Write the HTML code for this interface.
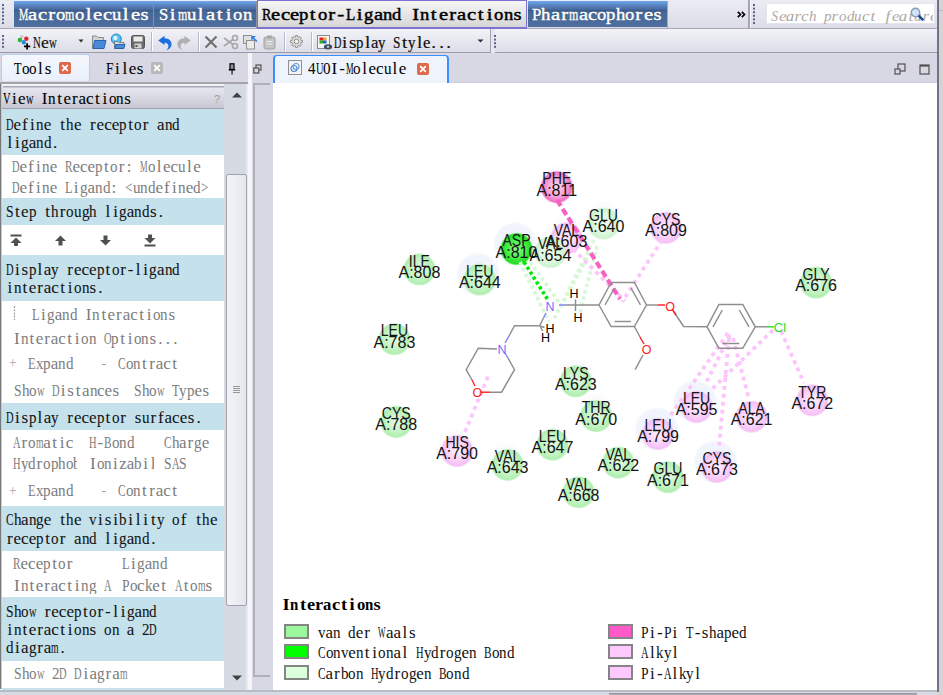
<!DOCTYPE html>
<html><head><meta charset="utf-8"><style>
*{margin:0;padding:0;box-sizing:border-box}
html,body{width:943px;height:695px;overflow:hidden;background:#d8d8d8}
body{position:relative;font-family:"Liberation Serif",serif}
.a{position:absolute}
.m{position:absolute;white-space:nowrap;font-family:"Liberation Serif",serif;line-height:16px;height:16px}
.m i{display:inline-block;font-style:normal;text-align:center;vertical-align:top}
.blue{position:absolute;left:2px;width:222px;background:#c5e1ec}
svg{position:absolute;left:0;top:0}
</style></head><body>
<div class="a" style="left:0px;top:0px;width:938px;height:28px;background:linear-gradient(#ececf4,#dcdce8)"></div>
<div class="a" style="left:0px;top:28px;width:938px;height:1px;background:#a8a8b8"></div>
<svg style="position:absolute;left:2px;top:4px" width="2" height="22"><rect x="0" y="0.0" width="2" height="2" fill="#5c6490"/><rect x="0" y="3.6" width="2" height="2" fill="#5c6490"/><rect x="0" y="7.2" width="2" height="2" fill="#5c6490"/><rect x="0" y="10.8" width="2" height="2" fill="#5c6490"/><rect x="0" y="14.4" width="2" height="2" fill="#5c6490"/><rect x="0" y="18.0" width="2" height="2" fill="#5c6490"/></svg>
<div class="a" style="left:14px;top:1px;width:139px;height:26px;background:linear-gradient(#70a8f0 0px,#5a86c0 4px,#4a6ea4 8px,#3c5c8c 9.5px,#466898 11px,#4d6e9e 26px)"></div>
<div class="a" style="left:153px;top:1px;width:1px;height:27px;background:#8890a0"></div>
<div class="a" style="left:154px;top:1px;width:102px;height:26px;background:linear-gradient(#70a8f0 0px,#5a86c0 4px,#4a6ea4 8px,#3c5c8c 9.5px,#466898 11px,#4d6e9e 26px)"></div>
<div class="a" style="left:256px;top:1px;width:1px;height:27px;background:#8890a0"></div>
<div class="a" style="left:257px;top:0px;width:270px;height:29px;border:1px solid #7c72d2;border-width:1px 1px 2px 1px;background:linear-gradient(#f6f6f6,#e8e8e8 45%,#d6d6d6)"></div>
<div class="a" style="left:528px;top:1px;width:139px;height:26px;background:linear-gradient(#70a8f0 0px,#5a86c0 4px,#4a6ea4 8px,#3c5c8c 9.5px,#466898 11px,#4d6e9e 26px)"></div>
<div class="a" style="left:667px;top:1px;width:1px;height:27px;background:#a8a8b8"></div>
<div class="m" style="left:19px;top:6.1px;font-size:17.5px;color:#fff;font-weight:normal;-webkit-text-stroke:0.45px #fff;text-shadow:0 0 1px #1a2a48;"><i style="width:15.56px;margin-right:-6.26px;transform:scaleX(0.598);transform-origin:0 0">M</i><i style="width:9.3px;transform:scaleX(1.180)">a</i><i style="width:9.3px;transform:scaleX(1.180)">c</i><i style="width:9.3px;transform:scaleX(1.180)">r</i><i style="width:9.3px;transform:scaleX(1.063)">o</i><i style="width:13.61px;margin-right:-4.31px;transform:scaleX(0.683);transform-origin:0 0">m</i><i style="width:9.3px;transform:scaleX(1.063)">o</i><i style="width:9.3px;transform:scaleX(1.180)">l</i><i style="width:9.3px;transform:scaleX(1.180)">e</i><i style="width:9.3px;transform:scaleX(1.180)">c</i><i style="width:9.3px;transform:scaleX(1.063)">u</i><i style="width:9.3px;transform:scaleX(1.180)">l</i><i style="width:9.3px;transform:scaleX(1.180)">e</i><i style="width:9.3px;transform:scaleX(1.180)">s</i></div>
<div class="m" style="left:159px;top:6.1px;font-size:17.5px;color:#fff;font-weight:normal;-webkit-text-stroke:0.45px #fff;text-shadow:0 0 1px #1a2a48;"><i style="width:9.73px;margin-right:-0.43px;transform:scaleX(0.956);transform-origin:0 0">S</i><i style="width:9.3px;transform:scaleX(1.180)">i</i><i style="width:13.61px;margin-right:-4.31px;transform:scaleX(0.683);transform-origin:0 0">m</i><i style="width:9.3px;transform:scaleX(1.063)">u</i><i style="width:9.3px;transform:scaleX(1.180)">l</i><i style="width:9.3px;transform:scaleX(1.180)">a</i><i style="width:9.3px;transform:scaleX(1.180)">t</i><i style="width:9.3px;transform:scaleX(1.180)">i</i><i style="width:9.3px;transform:scaleX(1.063)">o</i><i style="width:9.3px;transform:scaleX(1.063)">n</i></div>
<div class="m" style="left:262px;top:6.1px;font-size:17.5px;color:#000;font-weight:normal;-webkit-text-stroke:0.45px #000;"><i style="width:11.67px;margin-right:-2.37px;transform:scaleX(0.797);transform-origin:0 0">R</i><i style="width:9.3px;transform:scaleX(1.180)">e</i><i style="width:9.3px;transform:scaleX(1.180)">c</i><i style="width:9.3px;transform:scaleX(1.180)">e</i><i style="width:9.3px;transform:scaleX(1.063)">p</i><i style="width:9.3px;transform:scaleX(1.180)">t</i><i style="width:9.3px;transform:scaleX(1.063)">o</i><i style="width:9.3px;transform:scaleX(1.180)">r</i><i style="width:9.3px;transform:scaleX(1.180)">-</i><i style="width:10.69px;margin-right:-1.39px;transform:scaleX(0.870);transform-origin:0 0">L</i><i style="width:9.3px;transform:scaleX(1.180)">i</i><i style="width:9.3px;transform:scaleX(1.063)">g</i><i style="width:9.3px;transform:scaleX(1.180)">a</i><i style="width:9.3px;transform:scaleX(1.063)">n</i><i style="width:9.3px;transform:scaleX(1.063)">d</i><i style="width:9.3px"></i><i style="width:9.3px;transform:scaleX(1.180)">I</i><i style="width:9.3px;transform:scaleX(1.063)">n</i><i style="width:9.3px;transform:scaleX(1.180)">t</i><i style="width:9.3px;transform:scaleX(1.180)">e</i><i style="width:9.3px;transform:scaleX(1.180)">r</i><i style="width:9.3px;transform:scaleX(1.180)">a</i><i style="width:9.3px;transform:scaleX(1.180)">c</i><i style="width:9.3px;transform:scaleX(1.180)">t</i><i style="width:9.3px;transform:scaleX(1.180)">i</i><i style="width:9.3px;transform:scaleX(1.063)">o</i><i style="width:9.3px;transform:scaleX(1.063)">n</i><i style="width:9.3px;transform:scaleX(1.180)">s</i></div>
<div class="m" style="left:532px;top:6.1px;font-size:17.5px;color:#fff;font-weight:normal;-webkit-text-stroke:0.45px #fff;text-shadow:0 0 1px #1a2a48;"><i style="width:9.73px;margin-right:-0.43px;transform:scaleX(0.956);transform-origin:0 0">P</i><i style="width:9.3px;transform:scaleX(1.063)">h</i><i style="width:9.3px;transform:scaleX(1.180)">a</i><i style="width:9.3px;transform:scaleX(1.180)">r</i><i style="width:13.61px;margin-right:-4.31px;transform:scaleX(0.683);transform-origin:0 0">m</i><i style="width:9.3px;transform:scaleX(1.180)">a</i><i style="width:9.3px;transform:scaleX(1.180)">c</i><i style="width:9.3px;transform:scaleX(1.063)">o</i><i style="width:9.3px;transform:scaleX(1.063)">p</i><i style="width:9.3px;transform:scaleX(1.063)">h</i><i style="width:9.3px;transform:scaleX(1.063)">o</i><i style="width:9.3px;transform:scaleX(1.180)">r</i><i style="width:9.3px;transform:scaleX(1.180)">e</i><i style="width:9.3px;transform:scaleX(1.180)">s</i></div>
<svg style="position:absolute;left:737px;top:11px" width="9" height="7"><path d="M0.8 0.8L3.5 3.5L0.8 6.2M4.8 0.8L7.5 3.5L4.8 6.2" fill="none" stroke="#000" stroke-width="1.7"/></svg>
<div class="a" style="left:748px;top:0px;width:2px;height:29px;background:#a4a4b4"></div>
<div class="a" style="left:750px;top:0px;width:1px;height:28px;background:#f8f8fc"></div>
<svg style="position:absolute;left:753px;top:4px" width="2" height="22"><rect x="0" y="0.0" width="2" height="2" fill="#5c6490"/><rect x="0" y="3.6" width="2" height="2" fill="#5c6490"/><rect x="0" y="7.2" width="2" height="2" fill="#5c6490"/><rect x="0" y="10.8" width="2" height="2" fill="#5c6490"/><rect x="0" y="14.4" width="2" height="2" fill="#5c6490"/><rect x="0" y="18.0" width="2" height="2" fill="#5c6490"/></svg>
<div class="a" style="left:766px;top:3px;width:169px;height:21px;background:#fff;border:1px solid #e4e4ec"></div>
<div class="m" style="left:771px;top:8.4px;font-size:15.5px;color:#b0a8a4;font-weight:normal;width:162px;overflow:hidden;"><i style="width:8.62px;margin-right:-1.07px;transform:scaleX(0.876);transform-origin:0 0;font-style:italic">S</i><i style="width:7.55px;transform:scaleX(1.097);font-style:italic">e</i><i style="width:7.55px;transform:scaleX(1.097);font-style:italic">a</i><i style="width:7.55px;transform:scaleX(1.100);font-style:italic">r</i><i style="width:7.55px;transform:scaleX(1.097);font-style:italic">c</i><i style="width:7.75px;margin-right:-0.20px;transform:scaleX(0.974);transform-origin:0 0;font-style:italic">h</i><i style="width:7.55px"></i><i style="width:7.75px;margin-right:-0.20px;transform:scaleX(0.974);transform-origin:0 0;font-style:italic">p</i><i style="width:7.55px;transform:scaleX(1.100);font-style:italic">r</i><i style="width:7.75px;margin-right:-0.20px;transform:scaleX(0.974);transform-origin:0 0;font-style:italic">o</i><i style="width:7.75px;margin-right:-0.20px;transform:scaleX(0.974);transform-origin:0 0;font-style:italic">d</i><i style="width:7.75px;margin-right:-0.20px;transform:scaleX(0.974);transform-origin:0 0;font-style:italic">u</i><i style="width:7.55px;transform:scaleX(1.097);font-style:italic">c</i><i style="width:7.55px;transform:scaleX(1.100);font-style:italic">t</i><i style="width:7.55px"></i><i style="width:7.55px;transform:scaleX(1.100);font-style:italic">f</i><i style="width:7.55px;transform:scaleX(1.097);font-style:italic">e</i><i style="width:7.55px;transform:scaleX(1.097);font-style:italic">a</i><i style="width:7.55px;transform:scaleX(1.100);font-style:italic">t</i><i style="width:7.75px;margin-right:-0.20px;transform:scaleX(0.974);transform-origin:0 0;font-style:italic">u</i><i style="width:7.55px;transform:scaleX(1.100);font-style:italic">r</i><i style="width:7.55px;transform:scaleX(1.097);font-style:italic">e</i></div>
<div class="a" style="left:0px;top:29px;width:491px;height:24px;background:linear-gradient(#f2f2f8,#dcdce8)"></div>
<div class="a" style="left:495px;top:29px;width:443px;height:24px;background:linear-gradient(#f2f2f8,#dcdce8)"></div>
<div class="a" style="left:491px;top:29px;width:4px;height:24px;background:#e6e6ee"></div>
<div class="a" style="left:0px;top:52px;width:491px;height:1px;background:#9a9aaa"></div>
<div class="a" style="left:490px;top:29px;width:1px;height:24px;background:#a0a0b0"></div>
<div class="a" style="left:495px;top:52px;width:443px;height:1px;background:#9a9aaa"></div>
<svg style="position:absolute;left:2px;top:35px" width="2" height="14"><rect x="0" y="0.0" width="2" height="2" fill="#5c6490"/><rect x="0" y="3.6" width="2" height="2" fill="#5c6490"/><rect x="0" y="7.2" width="2" height="2" fill="#5c6490"/><rect x="0" y="10.8" width="2" height="2" fill="#5c6490"/></svg>
<svg style="position:absolute;left:494px;top:35px" width="2" height="14"><rect x="0" y="0.0" width="2" height="2" fill="#5c6490"/><rect x="0" y="3.6" width="2" height="2" fill="#5c6490"/><rect x="0" y="7.2" width="2" height="2" fill="#5c6490"/><rect x="0" y="10.8" width="2" height="2" fill="#5c6490"/></svg>
<div class="a" style="left:151px;top:32px;width:1px;height:19px;background:#b8b8c8"></div>
<div class="a" style="left:152px;top:32px;width:1px;height:19px;background:#fff"></div>
<div class="a" style="left:198px;top:32px;width:1px;height:19px;background:#b8b8c8"></div>
<div class="a" style="left:199px;top:32px;width:1px;height:19px;background:#fff"></div>
<div class="a" style="left:284px;top:32px;width:1px;height:19px;background:#b8b8c8"></div>
<div class="a" style="left:285px;top:32px;width:1px;height:19px;background:#fff"></div>
<div class="a" style="left:311px;top:32px;width:1px;height:19px;background:#b8b8c8"></div>
<div class="a" style="left:312px;top:32px;width:1px;height:19px;background:#fff"></div>
<div class="m" style="left:33px;top:35.3px;font-size:17px;color:#111;font-weight:normal;-webkit-text-stroke:0.2px #111;"><i style="width:12.28px;margin-right:-4.48px;transform:scaleX(0.635);transform-origin:0 0">N</i><i style="width:7.8px;transform:scaleX(1.034)">e</i><i style="width:12.28px;margin-right:-4.48px;transform:scaleX(0.635);transform-origin:0 0">w</i></div>
<div class="m" style="left:334px;top:35.0px;font-size:17px;color:#111;font-weight:normal;-webkit-text-stroke:0.2px #111;"><i style="width:12.28px;margin-right:-4.86px;transform:scaleX(0.604);transform-origin:0 0">D</i><i style="width:7.42px;transform:scaleX(1.120)">i</i><i style="width:7.42px;transform:scaleX(1.120)">s</i><i style="width:8.50px;margin-right:-1.08px;transform:scaleX(0.873);transform-origin:0 0">p</i><i style="width:7.42px;transform:scaleX(1.120)">l</i><i style="width:7.55px;margin-right:-0.13px;transform:scaleX(0.983);transform-origin:0 0">a</i><i style="width:8.50px;margin-right:-1.08px;transform:scaleX(0.873);transform-origin:0 0">y</i><i style="width:7.42px"></i><i style="width:9.45px;margin-right:-2.03px;transform:scaleX(0.785);transform-origin:0 0">S</i><i style="width:7.42px;transform:scaleX(1.120)">t</i><i style="width:8.50px;margin-right:-1.08px;transform:scaleX(0.873);transform-origin:0 0">y</i><i style="width:7.42px;transform:scaleX(1.120)">l</i><i style="width:7.55px;margin-right:-0.13px;transform:scaleX(0.983);transform-origin:0 0">e</i><i style="width:7.42px;transform:scaleX(1.120)">.</i><i style="width:7.42px;transform:scaleX(1.120)">.</i><i style="width:7.42px;transform:scaleX(1.120)">.</i></div>
<div class="a" style="left:0px;top:53px;width:248px;height:29px;background:#d8d8e4"></div>
<div class="a" style="left:1px;top:54px;width:89px;height:27px;background:linear-gradient(#f4f7fd,#eaf0fa);border:1px solid #b4cdf0;border-bottom:none;border-radius:3px 3px 0 0"></div>
<div class="m" style="left:14px;top:60.9px;font-size:17px;color:#000;font-weight:normal;-webkit-text-stroke:0.08px #000;"><i style="width:10.38px;margin-right:-2.83px;transform:scaleX(0.727);transform-origin:0 0">T</i><i style="width:8.50px;margin-right:-0.95px;transform:scaleX(0.888);transform-origin:0 0">o</i><i style="width:8.50px;margin-right:-0.95px;transform:scaleX(0.888);transform-origin:0 0">o</i><i style="width:7.55px">l</i><i style="width:7.55px">s</i></div>
<div class="m" style="left:106px;top:61.1px;font-size:17px;color:#000;font-weight:normal;-webkit-text-stroke:0.08px #000;"><i style="width:9.45px;margin-right:-1.90px;transform:scaleX(0.799);transform-origin:0 0">F</i><i style="width:7.55px">i</i><i style="width:7.55px">l</i><i style="width:7.55px">e</i><i style="width:7.55px">s</i></div>
<div class="a" style="left:0px;top:82px;width:248px;height:2px;background:#a4a4ac"></div>
<div class="a" style="left:0px;top:84px;width:248px;height:606px;background:#fff"></div>
<div class="a" style="left:0px;top:84px;width:2px;height:605px;background:#7a7a7a"></div>
<div class="a" style="left:1px;top:84px;width:1px;height:605px;background:#c8c8c8"></div>
<div class="a" style="left:2px;top:84px;width:222px;height:25px;background:linear-gradient(#ececf4,#c8c8d4);border-bottom:1px solid #a0a0ac"></div>
<div class="a" style="left:2px;top:84px;width:222px;height:2px;background:#f2f2f6"></div>
<div class="a" style="left:3px;top:86px;width:221px;height:1px;background:#a8a8b4"></div>
<div class="a" style="left:3px;top:87px;width:221px;height:1px;background:#c8c8d2"></div>
<div class="m" style="left:3px;top:90.7px;font-size:17px;color:#000;font-weight:normal;-webkit-text-stroke:0.08px #000;"><i style="width:12.28px;margin-right:-4.73px;transform:scaleX(0.615);transform-origin:0 0">V</i><i style="width:7.55px">i</i><i style="width:7.55px">e</i><i style="width:12.28px;margin-right:-4.73px;transform:scaleX(0.615);transform-origin:0 0">w</i><i style="width:7.55px"></i><i style="width:7.55px">I</i><i style="width:8.50px;margin-right:-0.95px;transform:scaleX(0.888);transform-origin:0 0">n</i><i style="width:7.55px">t</i><i style="width:7.55px">e</i><i style="width:7.55px">r</i><i style="width:7.55px">a</i><i style="width:7.55px">c</i><i style="width:7.55px">t</i><i style="width:7.55px">i</i><i style="width:8.50px;margin-right:-0.95px;transform:scaleX(0.888);transform-origin:0 0">o</i><i style="width:8.50px;margin-right:-0.95px;transform:scaleX(0.888);transform-origin:0 0">n</i><i style="width:7.55px">s</i></div>
<div class="blue" style="top:109px;height:46px"></div>
<div class="blue" style="top:198px;height:27px"></div>
<div class="blue" style="top:255px;height:46px"></div>
<div class="blue" style="top:403px;height:27px"></div>
<div class="blue" style="top:506px;height:45px"></div>
<div class="blue" style="top:597px;height:64px"></div>
<div class="blue" style="top:688px;height:2px"></div>
<div class="m" style="left:6px;top:116.5px;font-size:17px;color:#141414;font-weight:normal;-webkit-text-stroke:0.08px #141414;"><i style="width:12.28px;margin-right:-4.73px;transform:scaleX(0.615);transform-origin:0 0">D</i><i style="width:7.55px">e</i><i style="width:7.55px">f</i><i style="width:7.55px">i</i><i style="width:8.50px;margin-right:-0.95px;transform:scaleX(0.888);transform-origin:0 0">n</i><i style="width:7.55px">e</i><i style="width:7.55px"></i><i style="width:7.55px">t</i><i style="width:8.50px;margin-right:-0.95px;transform:scaleX(0.888);transform-origin:0 0">h</i><i style="width:7.55px">e</i><i style="width:7.55px"></i><i style="width:7.55px">r</i><i style="width:7.55px">e</i><i style="width:7.55px">c</i><i style="width:7.55px">e</i><i style="width:8.50px;margin-right:-0.95px;transform:scaleX(0.888);transform-origin:0 0">p</i><i style="width:7.55px">t</i><i style="width:8.50px;margin-right:-0.95px;transform:scaleX(0.888);transform-origin:0 0">o</i><i style="width:7.55px">r</i><i style="width:7.55px"></i><i style="width:7.55px">a</i><i style="width:8.50px;margin-right:-0.95px;transform:scaleX(0.888);transform-origin:0 0">n</i><i style="width:8.50px;margin-right:-0.95px;transform:scaleX(0.888);transform-origin:0 0">d</i></div>
<div class="m" style="left:6px;top:135.0px;font-size:17px;color:#141414;font-weight:normal;-webkit-text-stroke:0.08px #141414;"><i style="width:7.55px">l</i><i style="width:7.55px">i</i><i style="width:8.50px;margin-right:-0.95px;transform:scaleX(0.888);transform-origin:0 0">g</i><i style="width:7.55px">a</i><i style="width:8.50px;margin-right:-0.95px;transform:scaleX(0.888);transform-origin:0 0">n</i><i style="width:8.50px;margin-right:-0.95px;transform:scaleX(0.888);transform-origin:0 0">d</i><i style="width:7.55px">.</i></div>
<div class="m" style="left:12px;top:159.0px;font-size:17px;color:#7c7c7c;font-weight:normal;"><i style="width:12.28px;margin-right:-4.73px;transform:scaleX(0.615);transform-origin:0 0">D</i><i style="width:7.55px">e</i><i style="width:7.55px">f</i><i style="width:7.55px">i</i><i style="width:8.50px;margin-right:-0.95px;transform:scaleX(0.888);transform-origin:0 0">n</i><i style="width:7.55px">e</i><i style="width:7.55px"></i><i style="width:11.34px;margin-right:-3.79px;transform:scaleX(0.666);transform-origin:0 0">R</i><i style="width:7.55px">e</i><i style="width:7.55px">c</i><i style="width:7.55px">e</i><i style="width:8.50px;margin-right:-0.95px;transform:scaleX(0.888);transform-origin:0 0">p</i><i style="width:7.55px">t</i><i style="width:8.50px;margin-right:-0.95px;transform:scaleX(0.888);transform-origin:0 0">o</i><i style="width:7.55px">r</i><i style="width:7.55px">:</i><i style="width:7.55px"></i><i style="width:15.12px;margin-right:-7.57px;transform:scaleX(0.499);transform-origin:0 0">M</i><i style="width:8.50px;margin-right:-0.95px;transform:scaleX(0.888);transform-origin:0 0">o</i><i style="width:7.55px">l</i><i style="width:7.55px">e</i><i style="width:7.55px">c</i><i style="width:8.50px;margin-right:-0.95px;transform:scaleX(0.888);transform-origin:0 0">u</i><i style="width:7.55px">l</i><i style="width:7.55px">e</i></div>
<div class="m" style="left:12px;top:180.0px;font-size:17px;color:#7c7c7c;font-weight:normal;"><i style="width:12.28px;margin-right:-4.73px;transform:scaleX(0.615);transform-origin:0 0">D</i><i style="width:7.55px">e</i><i style="width:7.55px">f</i><i style="width:7.55px">i</i><i style="width:8.50px;margin-right:-0.95px;transform:scaleX(0.888);transform-origin:0 0">n</i><i style="width:7.55px">e</i><i style="width:7.55px"></i><i style="width:10.38px;margin-right:-2.83px;transform:scaleX(0.727);transform-origin:0 0">L</i><i style="width:7.55px">i</i><i style="width:8.50px;margin-right:-0.95px;transform:scaleX(0.888);transform-origin:0 0">g</i><i style="width:7.55px">a</i><i style="width:8.50px;margin-right:-0.95px;transform:scaleX(0.888);transform-origin:0 0">n</i><i style="width:8.50px;margin-right:-0.95px;transform:scaleX(0.888);transform-origin:0 0">d</i><i style="width:7.55px">:</i><i style="width:7.55px"></i><i style="width:9.59px;margin-right:-2.04px;transform:scaleX(0.787);transform-origin:0 0">&lt;</i><i style="width:8.50px;margin-right:-0.95px;transform:scaleX(0.888);transform-origin:0 0">u</i><i style="width:8.50px;margin-right:-0.95px;transform:scaleX(0.888);transform-origin:0 0">n</i><i style="width:8.50px;margin-right:-0.95px;transform:scaleX(0.888);transform-origin:0 0">d</i><i style="width:7.55px">e</i><i style="width:7.55px">f</i><i style="width:7.55px">i</i><i style="width:8.50px;margin-right:-0.95px;transform:scaleX(0.888);transform-origin:0 0">n</i><i style="width:7.55px">e</i><i style="width:8.50px;margin-right:-0.95px;transform:scaleX(0.888);transform-origin:0 0">d</i><i style="width:9.59px;margin-right:-2.04px;transform:scaleX(0.787);transform-origin:0 0">&gt;</i></div>
<div class="m" style="left:6px;top:204.2px;font-size:17px;color:#141414;font-weight:normal;-webkit-text-stroke:0.08px #141414;"><i style="width:9.45px;margin-right:-1.90px;transform:scaleX(0.799);transform-origin:0 0">S</i><i style="width:7.55px">t</i><i style="width:7.55px">e</i><i style="width:8.50px;margin-right:-0.95px;transform:scaleX(0.888);transform-origin:0 0">p</i><i style="width:7.55px"></i><i style="width:7.55px">t</i><i style="width:8.50px;margin-right:-0.95px;transform:scaleX(0.888);transform-origin:0 0">h</i><i style="width:7.55px">r</i><i style="width:8.50px;margin-right:-0.95px;transform:scaleX(0.888);transform-origin:0 0">o</i><i style="width:8.50px;margin-right:-0.95px;transform:scaleX(0.888);transform-origin:0 0">u</i><i style="width:8.50px;margin-right:-0.95px;transform:scaleX(0.888);transform-origin:0 0">g</i><i style="width:8.50px;margin-right:-0.95px;transform:scaleX(0.888);transform-origin:0 0">h</i><i style="width:7.55px"></i><i style="width:7.55px">l</i><i style="width:7.55px">i</i><i style="width:8.50px;margin-right:-0.95px;transform:scaleX(0.888);transform-origin:0 0">g</i><i style="width:7.55px">a</i><i style="width:8.50px;margin-right:-0.95px;transform:scaleX(0.888);transform-origin:0 0">n</i><i style="width:8.50px;margin-right:-0.95px;transform:scaleX(0.888);transform-origin:0 0">d</i><i style="width:7.55px">s</i><i style="width:7.55px">.</i></div>
<div class="m" style="left:6px;top:261.7px;font-size:17px;color:#141414;font-weight:normal;-webkit-text-stroke:0.08px #141414;"><i style="width:12.28px;margin-right:-4.73px;transform:scaleX(0.615);transform-origin:0 0">D</i><i style="width:7.55px">i</i><i style="width:7.55px">s</i><i style="width:8.50px;margin-right:-0.95px;transform:scaleX(0.888);transform-origin:0 0">p</i><i style="width:7.55px">l</i><i style="width:7.55px">a</i><i style="width:8.50px;margin-right:-0.95px;transform:scaleX(0.888);transform-origin:0 0">y</i><i style="width:7.55px"></i><i style="width:7.55px">r</i><i style="width:7.55px">e</i><i style="width:7.55px">c</i><i style="width:7.55px">e</i><i style="width:8.50px;margin-right:-0.95px;transform:scaleX(0.888);transform-origin:0 0">p</i><i style="width:7.55px">t</i><i style="width:8.50px;margin-right:-0.95px;transform:scaleX(0.888);transform-origin:0 0">o</i><i style="width:7.55px">r</i><i style="width:7.55px">-</i><i style="width:7.55px">l</i><i style="width:7.55px">i</i><i style="width:8.50px;margin-right:-0.95px;transform:scaleX(0.888);transform-origin:0 0">g</i><i style="width:7.55px">a</i><i style="width:8.50px;margin-right:-0.95px;transform:scaleX(0.888);transform-origin:0 0">n</i><i style="width:8.50px;margin-right:-0.95px;transform:scaleX(0.888);transform-origin:0 0">d</i></div>
<div class="m" style="left:6px;top:280.3px;font-size:17px;color:#141414;font-weight:normal;-webkit-text-stroke:0.08px #141414;"><i style="width:7.55px">i</i><i style="width:8.50px;margin-right:-0.95px;transform:scaleX(0.888);transform-origin:0 0">n</i><i style="width:7.55px">t</i><i style="width:7.55px">e</i><i style="width:7.55px">r</i><i style="width:7.55px">a</i><i style="width:7.55px">c</i><i style="width:7.55px">t</i><i style="width:7.55px">i</i><i style="width:8.50px;margin-right:-0.95px;transform:scaleX(0.888);transform-origin:0 0">o</i><i style="width:8.50px;margin-right:-0.95px;transform:scaleX(0.888);transform-origin:0 0">n</i><i style="width:7.55px">s</i><i style="width:7.55px">.</i></div>
<div class="m" style="left:32px;top:306.8px;font-size:17px;color:#7c7c7c;font-weight:normal;"><i style="width:10.38px;margin-right:-2.83px;transform:scaleX(0.727);transform-origin:0 0">L</i><i style="width:7.55px">i</i><i style="width:8.50px;margin-right:-0.95px;transform:scaleX(0.888);transform-origin:0 0">g</i><i style="width:7.55px">a</i><i style="width:8.50px;margin-right:-0.95px;transform:scaleX(0.888);transform-origin:0 0">n</i><i style="width:8.50px;margin-right:-0.95px;transform:scaleX(0.888);transform-origin:0 0">d</i><i style="width:7.55px"></i><i style="width:7.55px">I</i><i style="width:8.50px;margin-right:-0.95px;transform:scaleX(0.888);transform-origin:0 0">n</i><i style="width:7.55px">t</i><i style="width:7.55px">e</i><i style="width:7.55px">r</i><i style="width:7.55px">a</i><i style="width:7.55px">c</i><i style="width:7.55px">t</i><i style="width:7.55px">i</i><i style="width:8.50px;margin-right:-0.95px;transform:scaleX(0.888);transform-origin:0 0">o</i><i style="width:8.50px;margin-right:-0.95px;transform:scaleX(0.888);transform-origin:0 0">n</i><i style="width:7.55px">s</i></div>
<div class="m" style="left:13px;top:330.8px;font-size:17px;color:#7c7c7c;font-weight:normal;"><i style="width:7.55px">I</i><i style="width:8.50px;margin-right:-0.95px;transform:scaleX(0.888);transform-origin:0 0">n</i><i style="width:7.55px">t</i><i style="width:7.55px">e</i><i style="width:7.55px">r</i><i style="width:7.55px">a</i><i style="width:7.55px">c</i><i style="width:7.55px">t</i><i style="width:7.55px">i</i><i style="width:8.50px;margin-right:-0.95px;transform:scaleX(0.888);transform-origin:0 0">o</i><i style="width:8.50px;margin-right:-0.95px;transform:scaleX(0.888);transform-origin:0 0">n</i><i style="width:7.55px"></i><i style="width:12.28px;margin-right:-4.73px;transform:scaleX(0.615);transform-origin:0 0">O</i><i style="width:8.50px;margin-right:-0.95px;transform:scaleX(0.888);transform-origin:0 0">p</i><i style="width:7.55px">t</i><i style="width:7.55px">i</i><i style="width:8.50px;margin-right:-0.95px;transform:scaleX(0.888);transform-origin:0 0">o</i><i style="width:8.50px;margin-right:-0.95px;transform:scaleX(0.888);transform-origin:0 0">n</i><i style="width:7.55px">s</i><i style="width:7.55px">.</i><i style="width:7.55px">.</i><i style="width:7.55px">.</i></div>
<div class="m" style="left:9px;top:355.3px;font-size:14px;color:#a8a8a8;font-weight:normal;"><i style="width:7.90px;margin-right:-0.35px;transform:scaleX(0.956);transform-origin:0 0">+</i></div>
<div class="m" style="left:28px;top:355.7px;font-size:17px;color:#7c7c7c;font-weight:normal;"><i style="width:10.38px;margin-right:-2.83px;transform:scaleX(0.727);transform-origin:0 0">E</i><i style="width:8.50px;margin-right:-0.95px;transform:scaleX(0.888);transform-origin:0 0">x</i><i style="width:8.50px;margin-right:-0.95px;transform:scaleX(0.888);transform-origin:0 0">p</i><i style="width:7.55px">a</i><i style="width:8.50px;margin-right:-0.95px;transform:scaleX(0.888);transform-origin:0 0">n</i><i style="width:8.50px;margin-right:-0.95px;transform:scaleX(0.888);transform-origin:0 0">d</i></div>
<div class="m" style="left:100px;top:355.7px;font-size:14px;color:#a0a0a0;font-weight:normal;"><i style="width:7.55px">-</i></div>
<div class="m" style="left:118px;top:355.7px;font-size:17px;color:#7c7c7c;font-weight:normal;"><i style="width:11.34px;margin-right:-3.79px;transform:scaleX(0.666);transform-origin:0 0">C</i><i style="width:8.50px;margin-right:-0.95px;transform:scaleX(0.888);transform-origin:0 0">o</i><i style="width:8.50px;margin-right:-0.95px;transform:scaleX(0.888);transform-origin:0 0">n</i><i style="width:7.55px">t</i><i style="width:7.55px">r</i><i style="width:7.55px">a</i><i style="width:7.55px">c</i><i style="width:7.55px">t</i></div>
<div class="m" style="left:14px;top:383.3px;font-size:17px;color:#7c7c7c;font-weight:normal;"><i style="width:9.45px;margin-right:-1.90px;transform:scaleX(0.799);transform-origin:0 0">S</i><i style="width:8.50px;margin-right:-0.95px;transform:scaleX(0.888);transform-origin:0 0">h</i><i style="width:8.50px;margin-right:-0.95px;transform:scaleX(0.888);transform-origin:0 0">o</i><i style="width:12.28px;margin-right:-4.73px;transform:scaleX(0.615);transform-origin:0 0">w</i><i style="width:7.55px"></i><i style="width:12.28px;margin-right:-4.73px;transform:scaleX(0.615);transform-origin:0 0">D</i><i style="width:7.55px">i</i><i style="width:7.55px">s</i><i style="width:7.55px">t</i><i style="width:7.55px">a</i><i style="width:8.50px;margin-right:-0.95px;transform:scaleX(0.888);transform-origin:0 0">n</i><i style="width:7.55px">c</i><i style="width:7.55px">e</i><i style="width:7.55px">s</i></div>
<div class="m" style="left:134px;top:383.3px;font-size:17px;color:#7c7c7c;font-weight:normal;"><i style="width:9.45px;margin-right:-1.90px;transform:scaleX(0.799);transform-origin:0 0">S</i><i style="width:8.50px;margin-right:-0.95px;transform:scaleX(0.888);transform-origin:0 0">h</i><i style="width:8.50px;margin-right:-0.95px;transform:scaleX(0.888);transform-origin:0 0">o</i><i style="width:12.28px;margin-right:-4.73px;transform:scaleX(0.615);transform-origin:0 0">w</i><i style="width:7.55px"></i><i style="width:10.38px;margin-right:-2.83px;transform:scaleX(0.727);transform-origin:0 0">T</i><i style="width:8.50px;margin-right:-0.95px;transform:scaleX(0.888);transform-origin:0 0">y</i><i style="width:8.50px;margin-right:-0.95px;transform:scaleX(0.888);transform-origin:0 0">p</i><i style="width:7.55px">e</i><i style="width:7.55px">s</i></div>
<div class="m" style="left:6px;top:409.5px;font-size:17px;color:#141414;font-weight:normal;-webkit-text-stroke:0.08px #141414;"><i style="width:12.28px;margin-right:-4.73px;transform:scaleX(0.615);transform-origin:0 0">D</i><i style="width:7.55px">i</i><i style="width:7.55px">s</i><i style="width:8.50px;margin-right:-0.95px;transform:scaleX(0.888);transform-origin:0 0">p</i><i style="width:7.55px">l</i><i style="width:7.55px">a</i><i style="width:8.50px;margin-right:-0.95px;transform:scaleX(0.888);transform-origin:0 0">y</i><i style="width:7.55px"></i><i style="width:7.55px">r</i><i style="width:7.55px">e</i><i style="width:7.55px">c</i><i style="width:7.55px">e</i><i style="width:8.50px;margin-right:-0.95px;transform:scaleX(0.888);transform-origin:0 0">p</i><i style="width:7.55px">t</i><i style="width:8.50px;margin-right:-0.95px;transform:scaleX(0.888);transform-origin:0 0">o</i><i style="width:7.55px">r</i><i style="width:7.55px"></i><i style="width:7.55px">s</i><i style="width:8.50px;margin-right:-0.95px;transform:scaleX(0.888);transform-origin:0 0">u</i><i style="width:7.55px">r</i><i style="width:7.55px">f</i><i style="width:7.55px">a</i><i style="width:7.55px">c</i><i style="width:7.55px">e</i><i style="width:7.55px">s</i><i style="width:7.55px">.</i></div>
<div class="m" style="left:13px;top:434.8px;font-size:17px;color:#7c7c7c;font-weight:normal;"><i style="width:12.28px;margin-right:-4.73px;transform:scaleX(0.615);transform-origin:0 0">A</i><i style="width:7.55px">r</i><i style="width:8.50px;margin-right:-0.95px;transform:scaleX(0.888);transform-origin:0 0">o</i><i style="width:13.22px;margin-right:-5.67px;transform:scaleX(0.571);transform-origin:0 0">m</i><i style="width:7.55px">a</i><i style="width:7.55px">t</i><i style="width:7.55px">i</i><i style="width:7.55px">c</i></div>
<div class="m" style="left:89px;top:434.8px;font-size:17px;color:#7c7c7c;font-weight:normal;"><i style="width:12.28px;margin-right:-4.73px;transform:scaleX(0.615);transform-origin:0 0">H</i><i style="width:7.55px">-</i><i style="width:11.34px;margin-right:-3.79px;transform:scaleX(0.666);transform-origin:0 0">B</i><i style="width:8.50px;margin-right:-0.95px;transform:scaleX(0.888);transform-origin:0 0">o</i><i style="width:8.50px;margin-right:-0.95px;transform:scaleX(0.888);transform-origin:0 0">n</i><i style="width:8.50px;margin-right:-0.95px;transform:scaleX(0.888);transform-origin:0 0">d</i></div>
<div class="m" style="left:164px;top:434.8px;font-size:17px;color:#7c7c7c;font-weight:normal;"><i style="width:11.34px;margin-right:-3.79px;transform:scaleX(0.666);transform-origin:0 0">C</i><i style="width:8.50px;margin-right:-0.95px;transform:scaleX(0.888);transform-origin:0 0">h</i><i style="width:7.55px">a</i><i style="width:7.55px">r</i><i style="width:8.50px;margin-right:-0.95px;transform:scaleX(0.888);transform-origin:0 0">g</i><i style="width:7.55px">e</i></div>
<div class="m" style="left:13px;top:455.9px;font-size:17px;color:#7c7c7c;font-weight:normal;width:64px;overflow:hidden;"><i style="width:12.28px;margin-right:-4.73px;transform:scaleX(0.615);transform-origin:0 0">H</i><i style="width:8.50px;margin-right:-0.95px;transform:scaleX(0.888);transform-origin:0 0">y</i><i style="width:8.50px;margin-right:-0.95px;transform:scaleX(0.888);transform-origin:0 0">d</i><i style="width:7.55px">r</i><i style="width:8.50px;margin-right:-0.95px;transform:scaleX(0.888);transform-origin:0 0">o</i><i style="width:8.50px;margin-right:-0.95px;transform:scaleX(0.888);transform-origin:0 0">p</i><i style="width:8.50px;margin-right:-0.95px;transform:scaleX(0.888);transform-origin:0 0">h</i><i style="width:8.50px;margin-right:-0.95px;transform:scaleX(0.888);transform-origin:0 0">o</i><i style="width:8.50px;margin-right:-0.95px;transform:scaleX(0.888);transform-origin:0 0">b</i><i style="width:7.55px">i</i><i style="width:7.55px">c</i></div>
<div class="m" style="left:89px;top:455.9px;font-size:17px;color:#7c7c7c;font-weight:normal;width:65px;overflow:hidden;"><i style="width:7.55px">I</i><i style="width:8.50px;margin-right:-0.95px;transform:scaleX(0.888);transform-origin:0 0">o</i><i style="width:8.50px;margin-right:-0.95px;transform:scaleX(0.888);transform-origin:0 0">n</i><i style="width:7.55px">i</i><i style="width:7.55px">z</i><i style="width:7.55px">a</i><i style="width:8.50px;margin-right:-0.95px;transform:scaleX(0.888);transform-origin:0 0">b</i><i style="width:7.55px">i</i><i style="width:7.55px">l</i><i style="width:7.55px">i</i><i style="width:7.55px">t</i><i style="width:8.50px;margin-right:-0.95px;transform:scaleX(0.888);transform-origin:0 0">y</i></div>
<div class="m" style="left:164px;top:455.9px;font-size:17px;color:#7c7c7c;font-weight:normal;"><i style="width:9.45px;margin-right:-1.90px;transform:scaleX(0.799);transform-origin:0 0">S</i><i style="width:12.28px;margin-right:-4.73px;transform:scaleX(0.615);transform-origin:0 0">A</i><i style="width:9.45px;margin-right:-1.90px;transform:scaleX(0.799);transform-origin:0 0">S</i></div>
<div class="m" style="left:9px;top:482.5px;font-size:14px;color:#a8a8a8;font-weight:normal;"><i style="width:7.90px;margin-right:-0.35px;transform:scaleX(0.956);transform-origin:0 0">+</i></div>
<div class="m" style="left:28px;top:482.7px;font-size:17px;color:#7c7c7c;font-weight:normal;"><i style="width:10.38px;margin-right:-2.83px;transform:scaleX(0.727);transform-origin:0 0">E</i><i style="width:8.50px;margin-right:-0.95px;transform:scaleX(0.888);transform-origin:0 0">x</i><i style="width:8.50px;margin-right:-0.95px;transform:scaleX(0.888);transform-origin:0 0">p</i><i style="width:7.55px">a</i><i style="width:8.50px;margin-right:-0.95px;transform:scaleX(0.888);transform-origin:0 0">n</i><i style="width:8.50px;margin-right:-0.95px;transform:scaleX(0.888);transform-origin:0 0">d</i></div>
<div class="m" style="left:100px;top:482.7px;font-size:14px;color:#a0a0a0;font-weight:normal;"><i style="width:7.55px">-</i></div>
<div class="m" style="left:118px;top:482.7px;font-size:17px;color:#7c7c7c;font-weight:normal;"><i style="width:11.34px;margin-right:-3.79px;transform:scaleX(0.666);transform-origin:0 0">C</i><i style="width:8.50px;margin-right:-0.95px;transform:scaleX(0.888);transform-origin:0 0">o</i><i style="width:8.50px;margin-right:-0.95px;transform:scaleX(0.888);transform-origin:0 0">n</i><i style="width:7.55px">t</i><i style="width:7.55px">r</i><i style="width:7.55px">a</i><i style="width:7.55px">c</i><i style="width:7.55px">t</i></div>
<div class="m" style="left:6px;top:512.2px;font-size:17px;color:#141414;font-weight:normal;-webkit-text-stroke:0.08px #141414;"><i style="width:11.34px;margin-right:-3.79px;transform:scaleX(0.666);transform-origin:0 0">C</i><i style="width:8.50px;margin-right:-0.95px;transform:scaleX(0.888);transform-origin:0 0">h</i><i style="width:7.55px">a</i><i style="width:8.50px;margin-right:-0.95px;transform:scaleX(0.888);transform-origin:0 0">n</i><i style="width:8.50px;margin-right:-0.95px;transform:scaleX(0.888);transform-origin:0 0">g</i><i style="width:7.55px">e</i><i style="width:7.55px"></i><i style="width:7.55px">t</i><i style="width:8.50px;margin-right:-0.95px;transform:scaleX(0.888);transform-origin:0 0">h</i><i style="width:7.55px">e</i><i style="width:7.55px"></i><i style="width:8.50px;margin-right:-0.95px;transform:scaleX(0.888);transform-origin:0 0">v</i><i style="width:7.55px">i</i><i style="width:7.55px">s</i><i style="width:7.55px">i</i><i style="width:8.50px;margin-right:-0.95px;transform:scaleX(0.888);transform-origin:0 0">b</i><i style="width:7.55px">i</i><i style="width:7.55px">l</i><i style="width:7.55px">i</i><i style="width:7.55px">t</i><i style="width:8.50px;margin-right:-0.95px;transform:scaleX(0.888);transform-origin:0 0">y</i><i style="width:7.55px"></i><i style="width:8.50px;margin-right:-0.95px;transform:scaleX(0.888);transform-origin:0 0">o</i><i style="width:7.55px">f</i><i style="width:7.55px"></i><i style="width:7.55px">t</i><i style="width:8.50px;margin-right:-0.95px;transform:scaleX(0.888);transform-origin:0 0">h</i><i style="width:7.55px">e</i></div>
<div class="m" style="left:6px;top:531.0px;font-size:17px;color:#141414;font-weight:normal;-webkit-text-stroke:0.08px #141414;"><i style="width:7.55px">r</i><i style="width:7.55px">e</i><i style="width:7.55px">c</i><i style="width:7.55px">e</i><i style="width:8.50px;margin-right:-0.95px;transform:scaleX(0.888);transform-origin:0 0">p</i><i style="width:7.55px">t</i><i style="width:8.50px;margin-right:-0.95px;transform:scaleX(0.888);transform-origin:0 0">o</i><i style="width:7.55px">r</i><i style="width:7.55px"></i><i style="width:7.55px">a</i><i style="width:8.50px;margin-right:-0.95px;transform:scaleX(0.888);transform-origin:0 0">n</i><i style="width:8.50px;margin-right:-0.95px;transform:scaleX(0.888);transform-origin:0 0">d</i><i style="width:7.55px"></i><i style="width:7.55px">l</i><i style="width:7.55px">i</i><i style="width:8.50px;margin-right:-0.95px;transform:scaleX(0.888);transform-origin:0 0">g</i><i style="width:7.55px">a</i><i style="width:8.50px;margin-right:-0.95px;transform:scaleX(0.888);transform-origin:0 0">n</i><i style="width:8.50px;margin-right:-0.95px;transform:scaleX(0.888);transform-origin:0 0">d</i><i style="width:7.55px">.</i></div>
<div class="m" style="left:13px;top:556.3px;font-size:17px;color:#7c7c7c;font-weight:normal;"><i style="width:11.34px;margin-right:-3.79px;transform:scaleX(0.666);transform-origin:0 0">R</i><i style="width:7.55px">e</i><i style="width:7.55px">c</i><i style="width:7.55px">e</i><i style="width:8.50px;margin-right:-0.95px;transform:scaleX(0.888);transform-origin:0 0">p</i><i style="width:7.55px">t</i><i style="width:8.50px;margin-right:-0.95px;transform:scaleX(0.888);transform-origin:0 0">o</i><i style="width:7.55px">r</i></div>
<div class="m" style="left:122px;top:556.3px;font-size:17px;color:#7c7c7c;font-weight:normal;"><i style="width:10.38px;margin-right:-2.83px;transform:scaleX(0.727);transform-origin:0 0">L</i><i style="width:7.55px">i</i><i style="width:8.50px;margin-right:-0.95px;transform:scaleX(0.888);transform-origin:0 0">g</i><i style="width:7.55px">a</i><i style="width:8.50px;margin-right:-0.95px;transform:scaleX(0.888);transform-origin:0 0">n</i><i style="width:8.50px;margin-right:-0.95px;transform:scaleX(0.888);transform-origin:0 0">d</i></div>
<div class="m" style="left:13px;top:577.5px;font-size:17px;color:#7c7c7c;font-weight:normal;width:99px;overflow:hidden;"><i style="width:7.55px">I</i><i style="width:8.50px;margin-right:-0.95px;transform:scaleX(0.888);transform-origin:0 0">n</i><i style="width:7.55px">t</i><i style="width:7.55px">e</i><i style="width:7.55px">r</i><i style="width:7.55px">a</i><i style="width:7.55px">c</i><i style="width:7.55px">t</i><i style="width:7.55px">i</i><i style="width:8.50px;margin-right:-0.95px;transform:scaleX(0.888);transform-origin:0 0">n</i><i style="width:8.50px;margin-right:-0.95px;transform:scaleX(0.888);transform-origin:0 0">g</i><i style="width:7.55px"></i><i style="width:12.28px;margin-right:-4.73px;transform:scaleX(0.615);transform-origin:0 0">A</i><i style="width:7.55px">t</i><i style="width:8.50px;margin-right:-0.95px;transform:scaleX(0.888);transform-origin:0 0">o</i><i style="width:13.22px;margin-right:-5.67px;transform:scaleX(0.571);transform-origin:0 0">m</i><i style="width:7.55px">s</i></div>
<div class="m" style="left:122px;top:577.5px;font-size:17px;color:#7c7c7c;font-weight:normal;"><i style="width:9.45px;margin-right:-1.90px;transform:scaleX(0.799);transform-origin:0 0">P</i><i style="width:8.50px;margin-right:-0.95px;transform:scaleX(0.888);transform-origin:0 0">o</i><i style="width:7.55px">c</i><i style="width:8.50px;margin-right:-0.95px;transform:scaleX(0.888);transform-origin:0 0">k</i><i style="width:7.55px">e</i><i style="width:7.55px">t</i><i style="width:7.55px"></i><i style="width:12.28px;margin-right:-4.73px;transform:scaleX(0.615);transform-origin:0 0">A</i><i style="width:7.55px">t</i><i style="width:8.50px;margin-right:-0.95px;transform:scaleX(0.888);transform-origin:0 0">o</i><i style="width:13.22px;margin-right:-5.67px;transform:scaleX(0.571);transform-origin:0 0">m</i><i style="width:7.55px">s</i></div>
<div class="m" style="left:6px;top:604.0px;font-size:17px;color:#141414;font-weight:normal;-webkit-text-stroke:0.08px #141414;"><i style="width:9.45px;margin-right:-1.90px;transform:scaleX(0.799);transform-origin:0 0">S</i><i style="width:8.50px;margin-right:-0.95px;transform:scaleX(0.888);transform-origin:0 0">h</i><i style="width:8.50px;margin-right:-0.95px;transform:scaleX(0.888);transform-origin:0 0">o</i><i style="width:12.28px;margin-right:-4.73px;transform:scaleX(0.615);transform-origin:0 0">w</i><i style="width:7.55px"></i><i style="width:7.55px">r</i><i style="width:7.55px">e</i><i style="width:7.55px">c</i><i style="width:7.55px">e</i><i style="width:8.50px;margin-right:-0.95px;transform:scaleX(0.888);transform-origin:0 0">p</i><i style="width:7.55px">t</i><i style="width:8.50px;margin-right:-0.95px;transform:scaleX(0.888);transform-origin:0 0">o</i><i style="width:7.55px">r</i><i style="width:7.55px">-</i><i style="width:7.55px">l</i><i style="width:7.55px">i</i><i style="width:8.50px;margin-right:-0.95px;transform:scaleX(0.888);transform-origin:0 0">g</i><i style="width:7.55px">a</i><i style="width:8.50px;margin-right:-0.95px;transform:scaleX(0.888);transform-origin:0 0">n</i><i style="width:8.50px;margin-right:-0.95px;transform:scaleX(0.888);transform-origin:0 0">d</i></div>
<div class="m" style="left:6px;top:622.2px;font-size:17px;color:#141414;font-weight:normal;-webkit-text-stroke:0.08px #141414;"><i style="width:7.55px">i</i><i style="width:8.50px;margin-right:-0.95px;transform:scaleX(0.888);transform-origin:0 0">n</i><i style="width:7.55px">t</i><i style="width:7.55px">e</i><i style="width:7.55px">r</i><i style="width:7.55px">a</i><i style="width:7.55px">c</i><i style="width:7.55px">t</i><i style="width:7.55px">i</i><i style="width:8.50px;margin-right:-0.95px;transform:scaleX(0.888);transform-origin:0 0">o</i><i style="width:8.50px;margin-right:-0.95px;transform:scaleX(0.888);transform-origin:0 0">n</i><i style="width:7.55px">s</i><i style="width:7.55px"></i><i style="width:8.50px;margin-right:-0.95px;transform:scaleX(0.888);transform-origin:0 0">o</i><i style="width:8.50px;margin-right:-0.95px;transform:scaleX(0.888);transform-origin:0 0">n</i><i style="width:7.55px"></i><i style="width:7.55px">a</i><i style="width:7.55px"></i><i style="width:8.50px;margin-right:-0.95px;transform:scaleX(0.888);transform-origin:0 0">2</i><i style="width:12.28px;margin-right:-4.73px;transform:scaleX(0.615);transform-origin:0 0">D</i></div>
<div class="m" style="left:6px;top:639.8px;font-size:17px;color:#141414;font-weight:normal;-webkit-text-stroke:0.08px #141414;"><i style="width:8.50px;margin-right:-0.95px;transform:scaleX(0.888);transform-origin:0 0">d</i><i style="width:7.55px">i</i><i style="width:7.55px">a</i><i style="width:8.50px;margin-right:-0.95px;transform:scaleX(0.888);transform-origin:0 0">g</i><i style="width:7.55px">r</i><i style="width:7.55px">a</i><i style="width:13.22px;margin-right:-5.67px;transform:scaleX(0.571);transform-origin:0 0">m</i><i style="width:7.55px">.</i></div>
<div class="m" style="left:14px;top:666.4px;font-size:17px;color:#7c7c7c;font-weight:normal;"><i style="width:9.45px;margin-right:-1.90px;transform:scaleX(0.799);transform-origin:0 0">S</i><i style="width:8.50px;margin-right:-0.95px;transform:scaleX(0.888);transform-origin:0 0">h</i><i style="width:8.50px;margin-right:-0.95px;transform:scaleX(0.888);transform-origin:0 0">o</i><i style="width:12.28px;margin-right:-4.73px;transform:scaleX(0.615);transform-origin:0 0">w</i><i style="width:7.55px"></i><i style="width:8.50px;margin-right:-0.95px;transform:scaleX(0.888);transform-origin:0 0">2</i><i style="width:12.28px;margin-right:-4.73px;transform:scaleX(0.615);transform-origin:0 0">D</i><i style="width:7.55px"></i><i style="width:12.28px;margin-right:-4.73px;transform:scaleX(0.615);transform-origin:0 0">D</i><i style="width:7.55px">i</i><i style="width:7.55px">a</i><i style="width:8.50px;margin-right:-0.95px;transform:scaleX(0.888);transform-origin:0 0">g</i><i style="width:7.55px">r</i><i style="width:7.55px">a</i><i style="width:13.22px;margin-right:-5.67px;transform:scaleX(0.571);transform-origin:0 0">m</i></div>
<div class="a" style="left:224px;top:84px;width:22px;height:606px;background:#d6dae2"></div>
<div class="a" style="left:246px;top:84px;width:2px;height:606px;background:#e8eaf0"></div>
<div class="a" style="left:226px;top:174px;width:21px;height:432px;background:linear-gradient(90deg,#f4f4f8,#e4e6ec);border:1px solid #9ea2ac;border-radius:2px"></div>
<div class="a" style="left:248px;top:53px;width:4px;height:637px;background:#f6f6fa"></div>
<div class="a" style="left:252px;top:53px;width:686px;height:29px;background:#d8d8e4"></div>
<div class="a" style="left:252px;top:82px;width:21px;height:608px;background:#d8d8e4"></div>
<div class="a" style="left:273px;top:82px;width:665px;height:608px;background:#fff"></div>
<div class="a" style="left:449px;top:82px;width:489px;height:1px;background:#d0d0dc"></div>
<div class="a" style="left:273px;top:55px;width:176px;height:28px;background:#eef3fc;border:1px solid #3a8cff;border-width:1px 2px 0 2px;border-radius:4px 4px 0 0"></div>
<div class="m" style="left:308px;top:61.3px;font-size:17px;color:#000;font-weight:normal;"><i style="width:8.50px;margin-right:-0.95px;transform:scaleX(0.888);transform-origin:0 0">4</i><i style="width:12.28px;margin-right:-4.73px;transform:scaleX(0.615);transform-origin:0 0">U</i><i style="width:8.50px;margin-right:-0.95px;transform:scaleX(0.888);transform-origin:0 0">0</i><i style="width:7.55px">I</i><i style="width:7.55px">-</i><i style="width:15.12px;margin-right:-7.57px;transform:scaleX(0.499);transform-origin:0 0">M</i><i style="width:8.50px;margin-right:-0.95px;transform:scaleX(0.888);transform-origin:0 0">o</i><i style="width:7.55px">l</i><i style="width:7.55px">e</i><i style="width:7.55px">c</i><i style="width:8.50px;margin-right:-0.95px;transform:scaleX(0.888);transform-origin:0 0">u</i><i style="width:7.55px">l</i><i style="width:7.55px">e</i></div>
<div class="a" style="left:253px;top:83px;width:17px;height:2px;background:#b0b0b8"></div>
<div class="a" style="left:253px;top:83px;width:2px;height:594px;background:#b0b0b8"></div>
<div class="a" style="left:253px;top:675px;width:17px;height:2px;background:#b0b0b8"></div>
<div class="m" style="left:282px;top:597.1px;font-size:16px;color:#000;font-weight:bold;"><i style="width:8.3px;transform:scaleX(1.150)">I</i><i style="width:8.90px;margin-right:-0.60px;transform:scaleX(0.933);transform-origin:0 0">n</i><i style="width:8.3px;transform:scaleX(1.150)">t</i><i style="width:8.3px;transform:scaleX(1.150)">e</i><i style="width:8.3px;transform:scaleX(1.150)">r</i><i style="width:8.3px;transform:scaleX(1.038)">a</i><i style="width:8.3px;transform:scaleX(1.150)">c</i><i style="width:8.3px;transform:scaleX(1.150)">t</i><i style="width:8.3px;transform:scaleX(1.150)">i</i><i style="width:8.3px;transform:scaleX(1.038)">o</i><i style="width:8.90px;margin-right:-0.60px;transform:scaleX(0.933);transform-origin:0 0">n</i><i style="width:8.3px;transform:scaleX(1.150)">s</i></div>
<div class="a" style="left:284px;top:624px;width:25px;height:15px;border:2px solid #858585;background:#9cf89c"></div>
<div class="m" style="left:318px;top:624.5px;font-size:17px;color:#111;font-weight:normal;"><i style="width:8.50px;margin-right:-0.95px;transform:scaleX(0.888);transform-origin:0 0">v</i><i style="width:7.55px">a</i><i style="width:8.50px;margin-right:-0.95px;transform:scaleX(0.888);transform-origin:0 0">n</i><i style="width:7.55px"></i><i style="width:8.50px;margin-right:-0.95px;transform:scaleX(0.888);transform-origin:0 0">d</i><i style="width:7.55px">e</i><i style="width:7.55px">r</i><i style="width:7.55px"></i><i style="width:16.05px;margin-right:-8.50px;transform:scaleX(0.471);transform-origin:0 0">W</i><i style="width:7.55px">a</i><i style="width:7.55px">a</i><i style="width:7.55px">l</i><i style="width:7.55px">s</i></div>
<div class="a" style="left:284px;top:644px;width:25px;height:15px;border:2px solid #858585;background:#00ff00"></div>
<div class="m" style="left:318px;top:644.5px;font-size:17px;color:#111;font-weight:normal;"><i style="width:11.34px;margin-right:-3.79px;transform:scaleX(0.666);transform-origin:0 0">C</i><i style="width:8.50px;margin-right:-0.95px;transform:scaleX(0.888);transform-origin:0 0">o</i><i style="width:8.50px;margin-right:-0.95px;transform:scaleX(0.888);transform-origin:0 0">n</i><i style="width:8.50px;margin-right:-0.95px;transform:scaleX(0.888);transform-origin:0 0">v</i><i style="width:7.55px">e</i><i style="width:8.50px;margin-right:-0.95px;transform:scaleX(0.888);transform-origin:0 0">n</i><i style="width:7.55px">t</i><i style="width:7.55px">i</i><i style="width:8.50px;margin-right:-0.95px;transform:scaleX(0.888);transform-origin:0 0">o</i><i style="width:8.50px;margin-right:-0.95px;transform:scaleX(0.888);transform-origin:0 0">n</i><i style="width:7.55px">a</i><i style="width:7.55px">l</i><i style="width:7.55px"></i><i style="width:12.28px;margin-right:-4.73px;transform:scaleX(0.615);transform-origin:0 0">H</i><i style="width:8.50px;margin-right:-0.95px;transform:scaleX(0.888);transform-origin:0 0">y</i><i style="width:8.50px;margin-right:-0.95px;transform:scaleX(0.888);transform-origin:0 0">d</i><i style="width:7.55px">r</i><i style="width:8.50px;margin-right:-0.95px;transform:scaleX(0.888);transform-origin:0 0">o</i><i style="width:8.50px;margin-right:-0.95px;transform:scaleX(0.888);transform-origin:0 0">g</i><i style="width:7.55px">e</i><i style="width:8.50px;margin-right:-0.95px;transform:scaleX(0.888);transform-origin:0 0">n</i><i style="width:7.55px"></i><i style="width:11.34px;margin-right:-3.79px;transform:scaleX(0.666);transform-origin:0 0">B</i><i style="width:8.50px;margin-right:-0.95px;transform:scaleX(0.888);transform-origin:0 0">o</i><i style="width:8.50px;margin-right:-0.95px;transform:scaleX(0.888);transform-origin:0 0">n</i><i style="width:8.50px;margin-right:-0.95px;transform:scaleX(0.888);transform-origin:0 0">d</i></div>
<div class="a" style="left:284px;top:665px;width:25px;height:15px;border:2px solid #858585;background:#dcffdc"></div>
<div class="m" style="left:318px;top:665.5px;font-size:17px;color:#111;font-weight:normal;"><i style="width:11.34px;margin-right:-3.79px;transform:scaleX(0.666);transform-origin:0 0">C</i><i style="width:7.55px">a</i><i style="width:7.55px">r</i><i style="width:8.50px;margin-right:-0.95px;transform:scaleX(0.888);transform-origin:0 0">b</i><i style="width:8.50px;margin-right:-0.95px;transform:scaleX(0.888);transform-origin:0 0">o</i><i style="width:8.50px;margin-right:-0.95px;transform:scaleX(0.888);transform-origin:0 0">n</i><i style="width:7.55px"></i><i style="width:12.28px;margin-right:-4.73px;transform:scaleX(0.615);transform-origin:0 0">H</i><i style="width:8.50px;margin-right:-0.95px;transform:scaleX(0.888);transform-origin:0 0">y</i><i style="width:8.50px;margin-right:-0.95px;transform:scaleX(0.888);transform-origin:0 0">d</i><i style="width:7.55px">r</i><i style="width:8.50px;margin-right:-0.95px;transform:scaleX(0.888);transform-origin:0 0">o</i><i style="width:8.50px;margin-right:-0.95px;transform:scaleX(0.888);transform-origin:0 0">g</i><i style="width:7.55px">e</i><i style="width:8.50px;margin-right:-0.95px;transform:scaleX(0.888);transform-origin:0 0">n</i><i style="width:7.55px"></i><i style="width:11.34px;margin-right:-3.79px;transform:scaleX(0.666);transform-origin:0 0">B</i><i style="width:8.50px;margin-right:-0.95px;transform:scaleX(0.888);transform-origin:0 0">o</i><i style="width:8.50px;margin-right:-0.95px;transform:scaleX(0.888);transform-origin:0 0">n</i><i style="width:8.50px;margin-right:-0.95px;transform:scaleX(0.888);transform-origin:0 0">d</i></div>
<div class="a" style="left:608px;top:624px;width:25px;height:15px;border:2px solid #858585;background:#ff5ac8"></div>
<div class="m" style="left:641px;top:624.5px;font-size:17px;color:#111;font-weight:normal;"><i style="width:9.45px;margin-right:-1.90px;transform:scaleX(0.799);transform-origin:0 0">P</i><i style="width:7.55px">i</i><i style="width:7.55px">-</i><i style="width:9.45px;margin-right:-1.90px;transform:scaleX(0.799);transform-origin:0 0">P</i><i style="width:7.55px">i</i><i style="width:7.55px"></i><i style="width:10.38px;margin-right:-2.83px;transform:scaleX(0.727);transform-origin:0 0">T</i><i style="width:7.55px">-</i><i style="width:7.55px">s</i><i style="width:8.50px;margin-right:-0.95px;transform:scaleX(0.888);transform-origin:0 0">h</i><i style="width:7.55px">a</i><i style="width:8.50px;margin-right:-0.95px;transform:scaleX(0.888);transform-origin:0 0">p</i><i style="width:7.55px">e</i><i style="width:8.50px;margin-right:-0.95px;transform:scaleX(0.888);transform-origin:0 0">d</i></div>
<div class="a" style="left:608px;top:644px;width:25px;height:15px;border:2px solid #858585;background:#ffc8ff"></div>
<div class="m" style="left:641px;top:644.5px;font-size:17px;color:#111;font-weight:normal;"><i style="width:12.28px;margin-right:-4.73px;transform:scaleX(0.615);transform-origin:0 0">A</i><i style="width:7.55px">l</i><i style="width:8.50px;margin-right:-0.95px;transform:scaleX(0.888);transform-origin:0 0">k</i><i style="width:8.50px;margin-right:-0.95px;transform:scaleX(0.888);transform-origin:0 0">y</i><i style="width:7.55px">l</i></div>
<div class="a" style="left:608px;top:665px;width:25px;height:15px;border:2px solid #858585;background:#ffc8ff"></div>
<div class="m" style="left:641px;top:665.5px;font-size:17px;color:#111;font-weight:normal;"><i style="width:9.45px;margin-right:-1.90px;transform:scaleX(0.799);transform-origin:0 0">P</i><i style="width:7.55px">i</i><i style="width:7.55px">-</i><i style="width:12.28px;margin-right:-4.73px;transform:scaleX(0.615);transform-origin:0 0">A</i><i style="width:7.55px">l</i><i style="width:8.50px;margin-right:-0.95px;transform:scaleX(0.888);transform-origin:0 0">k</i><i style="width:8.50px;margin-right:-0.95px;transform:scaleX(0.888);transform-origin:0 0">y</i><i style="width:7.55px">l</i></div>
<svg width="943" height="695" viewBox="0 0 943 695" style="position:absolute;left:0;top:0">
<defs>
<radialGradient id="gvdw" cx="0.5" cy="0.5" r="0.5"><stop offset="0" stop-color="#e4fae4"/><stop offset="0.6" stop-color="#c4f4c4"/><stop offset="0.9" stop-color="#b0eeb0"/><stop offset="1" stop-color="#b0eeb0" stop-opacity="0.3"/></radialGradient>
<radialGradient id="ghb" cx="0.5" cy="0.5" r="0.5"><stop offset="0" stop-color="#90f890"/><stop offset="0.6" stop-color="#44ee44"/><stop offset="0.9" stop-color="#22dd22"/><stop offset="1" stop-color="#22dd22" stop-opacity="0.3"/></radialGradient>
<radialGradient id="gchb" cx="0.5" cy="0.5" r="0.5"><stop offset="0" stop-color="#f0fcf0"/><stop offset="0.6" stop-color="#def8de"/><stop offset="0.9" stop-color="#cdf2cd"/><stop offset="1" stop-color="#cdf2cd" stop-opacity="0.3"/></radialGradient>
<radialGradient id="gpipi" cx="0.5" cy="0.5" r="0.5"><stop offset="0" stop-color="#ffd8f0"/><stop offset="0.6" stop-color="#f8a0d8"/><stop offset="0.9" stop-color="#ee70c0"/><stop offset="1" stop-color="#ee70c0" stop-opacity="0.3"/></radialGradient>
<radialGradient id="galk" cx="0.5" cy="0.5" r="0.5"><stop offset="0" stop-color="#fff0ff"/><stop offset="0.6" stop-color="#fad2fa"/><stop offset="0.9" stop-color="#f4c0f4"/><stop offset="1" stop-color="#f4c0f4" stop-opacity="0.3"/></radialGradient>
<radialGradient id="halo" cx="0.5" cy="0.5" r="0.5"><stop offset="0.5" stop-color="#eff3fb"/><stop offset="0.9" stop-color="#f2f5fc"/><stop offset="1" stop-color="#f6f8fd" stop-opacity="0.3"/></radialGradient><radialGradient id="halo1" cx="0.5" cy="0.5" r="0.5"><stop offset="0.5" stop-color="#f6f8fd"/><stop offset="1" stop-color="#f8f9fd" stop-opacity="0.3"/></radialGradient>
<clipPath id="ed"><rect x="274" y="82" width="664" height="608"/></clipPath>
</defs><g clip-path="url(#ed)">
<circle cx="556.3" cy="184.6" r="19.5" fill="url(#halo1)"/>
<circle cx="603.0" cy="221.0" r="19.5" fill="url(#halo1)"/>
<circle cx="665.5" cy="225.3" r="19.5" fill="url(#halo1)"/>
<circle cx="565.9" cy="235.9" r="19.5" fill="url(#halo1)"/>
<circle cx="515.0" cy="244.0" r="22" fill="url(#halo)"/>
<circle cx="478.3" cy="274.5" r="22" fill="url(#halo)"/>
<circle cx="575.3" cy="378.8" r="19.5" fill="url(#halo1)"/>
<circle cx="595.7" cy="413.5" r="19.5" fill="url(#halo1)"/>
<circle cx="695.1" cy="401.9" r="22" fill="url(#halo)"/>
<circle cx="656.6" cy="428.9" r="22" fill="url(#halo)"/>
<circle cx="456.6" cy="448.4" r="19.5" fill="url(#halo1)"/>
<circle cx="507.1" cy="462.3" r="19.5" fill="url(#halo1)"/>
<circle cx="715.4" cy="461.9" r="22" fill="url(#halo)"/>
<circle cx="556.8" cy="187.1" r="16.3" fill="url(#gpipi)"/>
<circle cx="603.5" cy="223.5" r="16.3" fill="url(#gchb)"/>
<circle cx="666.0" cy="227.8" r="16.3" fill="url(#galk)"/>
<circle cx="566.4" cy="238.4" r="16.3" fill="url(#galk)"/>
<circle cx="516.5" cy="249.0" r="16.3" fill="url(#ghb)"/>
<circle cx="550.4" cy="252.2" r="16.3" fill="url(#gchb)"/>
<circle cx="419.4" cy="269.4" r="16.3" fill="url(#gvdw)"/>
<circle cx="479.8" cy="279.5" r="16.3" fill="url(#gvdw)"/>
<circle cx="816.1" cy="282.6" r="16.3" fill="url(#gvdw)"/>
<circle cx="394.4" cy="339.1" r="16.3" fill="url(#gvdw)"/>
<circle cx="575.8" cy="381.3" r="16.3" fill="url(#gvdw)"/>
<circle cx="596.2" cy="416.0" r="16.3" fill="url(#gvdw)"/>
<circle cx="696.6" cy="406.9" r="16.3" fill="url(#galk)"/>
<circle cx="751.6" cy="416.7" r="16.3" fill="url(#galk)"/>
<circle cx="812.3" cy="400.3" r="16.3" fill="url(#galk)"/>
<circle cx="396.2" cy="421.9" r="16.3" fill="url(#gvdw)"/>
<circle cx="658.1" cy="433.9" r="16.3" fill="url(#galk)"/>
<circle cx="457.1" cy="450.9" r="16.3" fill="url(#galk)"/>
<circle cx="552.5" cy="444.6" r="16.3" fill="url(#gvdw)"/>
<circle cx="507.6" cy="464.8" r="16.3" fill="url(#gvdw)"/>
<circle cx="618.3" cy="462.6" r="16.3" fill="url(#gvdw)"/>
<circle cx="667.9" cy="477.2" r="16.3" fill="url(#gvdw)"/>
<circle cx="716.9" cy="466.9" r="16.3" fill="url(#galk)"/>
<circle cx="578.6" cy="492.3" r="16.3" fill="url(#gvdw)"/>
<line x1="520" y1="262" x2="549" y2="322" style="stroke:#d6f8d6;stroke-width:3.6;stroke-dasharray:3.5 3"/>
<line x1="530" y1="262" x2="561" y2="305" style="stroke:#d6f8d6;stroke-width:3.6;stroke-dasharray:3.5 3"/>
<line x1="594" y1="240" x2="553" y2="321" style="stroke:#d6f8d6;stroke-width:3.6;stroke-dasharray:3.5 3"/>
<line x1="597" y1="246" x2="580" y2="312" style="stroke:#d6f8d6;stroke-width:3.6;stroke-dasharray:3.5 3"/>
<line x1="590" y1="252" x2="561" y2="307" style="stroke:#d6f8d6;stroke-width:3.6;stroke-dasharray:3.5 3"/>
<line x1="524" y1="262" x2="548" y2="300" style="stroke:#00ea00;stroke-width:3.6;stroke-dasharray:3.2 2.6"/>
<line x1="573" y1="249" x2="625" y2="301" style="stroke:#fcc6fc;stroke-width:3.8;stroke-dasharray:4 4"/>
<line x1="662" y1="240" x2="622" y2="302" style="stroke:#fcc6fc;stroke-width:3.8;stroke-dasharray:4 4"/>
<line x1="557" y1="200" x2="620" y2="299" style="stroke:#f860c4;stroke-width:4.2;stroke-dasharray:7 3.5"/>
<line x1="465" y1="432" x2="489" y2="374" style="stroke:#fcc6fc;stroke-width:3.8;stroke-dasharray:4 4"/>
<line x1="728" y1="333" x2="668" y2="419" style="stroke:#fcc6fc;stroke-width:3.8;stroke-dasharray:4 4"/>
<line x1="730" y1="335" x2="706" y2="383" style="stroke:#fcc6fc;stroke-width:3.8;stroke-dasharray:4 4"/>
<line x1="729" y1="338" x2="719" y2="447" style="stroke:#fcc6fc;stroke-width:3.8;stroke-dasharray:4 4"/>
<line x1="733" y1="338" x2="749" y2="399" style="stroke:#fcc6fc;stroke-width:3.8;stroke-dasharray:4 4"/>
<line x1="773" y1="330" x2="710" y2="391" style="stroke:#fcc6fc;stroke-width:3.8;stroke-dasharray:4 4"/>
<line x1="781" y1="331" x2="804" y2="383" style="stroke:#fcc6fc;stroke-width:3.8;stroke-dasharray:4 4"/>
<polyline points="599,305 611.1,282.4 634.4,282.4 646.5,305 634.4,326.5 611.1,326.5 599,305" style="stroke:#8e8e8e;stroke-width:1.45;fill:none"/>
<polyline points="605,305 614.5,288" style="stroke:#8e8e8e;stroke-width:1.45;fill:none"/>
<polyline points="631,288 640.5,305" style="stroke:#8e8e8e;stroke-width:1.45;fill:none"/>
<polyline points="614.5,321.5 631,321.5" style="stroke:#8e8e8e;stroke-width:1.45;fill:none"/>
<polyline points="707.1,326.8 718.9,304.5 742.7,304.5 755.3,326.8 742.7,348.3 718.9,348.3 707.1,326.8" style="stroke:#8e8e8e;stroke-width:1.45;fill:none"/>
<polyline points="713,326.8 722.3,310" style="stroke:#8e8e8e;stroke-width:1.45;fill:none"/>
<polyline points="739.3,310 749,326.8" style="stroke:#8e8e8e;stroke-width:1.45;fill:none"/>
<polyline points="722.3,343.5 739.3,343.5" style="stroke:#8e8e8e;stroke-width:1.45;fill:none"/>
<polyline points="646.5,305 658,305" style="stroke:#8e8e8e;stroke-width:1.45;fill:none"/>
<polyline points="658,305 665,305" style="stroke:#ff2020;stroke-width:1.45"/>
<polyline points="674,312 683.6,326.5 707.1,326.8" style="stroke:#8e8e8e;stroke-width:1.45;fill:none"/>
<polyline points="672,309 676,315" style="stroke:#ff2020;stroke-width:1.45"/>
<polyline points="755.3,326.8 767,326.8" style="stroke:#8e8e8e;stroke-width:1.45;fill:none"/>
<polyline points="767,326.8 774,326.8" style="stroke:#22dd22;stroke-width:1.45"/>
<polyline points="634.4,326.5 640,337" style="stroke:#8e8e8e;stroke-width:1.45;fill:none"/>
<polyline points="640,337 644,344" style="stroke:#ff2020;stroke-width:1.45"/>
<polyline points="643,355 635.2,369.6" style="stroke:#8e8e8e;stroke-width:1.45;fill:none"/>
<polyline points="599,305 566,305" style="stroke:#8e8e8e;stroke-width:1.45;fill:none"/>
<polyline points="566,305 559,305" style="stroke:#8080ff;stroke-width:1.45"/>
<polyline points="546,313 543.5,318" style="stroke:#8080ff;stroke-width:1.45"/>
<polyline points="543.5,318 539.6,325.7" style="stroke:#8e8e8e;stroke-width:1.45;fill:none"/>
<polyline points="539.6,325.7 514.5,325.7 509,336" style="stroke:#8e8e8e;stroke-width:1.45;fill:none"/>
<polyline points="509,336 505,343" style="stroke:#8080ff;stroke-width:1.45"/>
<polyline points="575.5,299.5 575.5,311" style="stroke:#8e8e8e;stroke-width:1.45;fill:none"/>
<polyline points="540,326 544.5,327.5" style="stroke:#8e8e8e;stroke-width:1.45;fill:none"/>
<polyline points="540,326 542.5,331" style="stroke:#8e8e8e;stroke-width:1.45;fill:none"/>
<polyline points="497,349 478.3,348.2 466.2,369.7 472,380" style="stroke:#8e8e8e;stroke-width:1.45;fill:none"/>
<polyline points="472,380 475,386" style="stroke:#ff2020;stroke-width:1.45"/>
<polyline points="481,392.2 490,392.2" style="stroke:#ff2020;stroke-width:1.45"/>
<polyline points="490,392.2 501.6,392.2 514.5,369.7 508,358" style="stroke:#8e8e8e;stroke-width:1.45;fill:none"/>
<polyline points="508,358 505,353" style="stroke:#8080ff;stroke-width:1.45"/>
<text x="550" y="310.5" fill="#7070ff" style="font:12.5px 'Liberation Sans',sans-serif" text-anchor="middle">N</text>
<text x="502" y="354" fill="#7070ff" style="font:12.5px 'Liberation Sans',sans-serif" text-anchor="middle">N</text>
<text x="670" y="311" fill="#ff2020" style="font:12.5px 'Liberation Sans',sans-serif" text-anchor="middle">O</text>
<text x="646.5" y="354" fill="#ff2020" style="font:12.5px 'Liberation Sans',sans-serif" text-anchor="middle">O</text>
<text x="477.4" y="397" fill="#ff2020" style="font:12.5px 'Liberation Sans',sans-serif" text-anchor="middle">O</text>
<text x="780" y="331.5" fill="#22dd22" style="font:13px 'Liberation Sans',sans-serif" text-anchor="middle">Cl</text>
<text x="574" y="298" fill="#000" style="font:12.5px 'Liberation Sans',sans-serif" text-anchor="middle">H</text>
<text x="578" y="322" fill="#000" style="font:12.5px 'Liberation Sans',sans-serif" text-anchor="middle">H</text>
<text x="550" y="333" fill="#000" style="font:12.5px 'Liberation Sans',sans-serif" text-anchor="middle">H</text>
<text x="545.6" y="342" fill="#000" style="font:12.5px 'Liberation Sans',sans-serif" text-anchor="middle">H</text>
<text transform="translate(556.8,184.3) scale(0.88,1)" text-anchor="middle" style="font:16px 'Liberation Sans',sans-serif" fill="#141414">PHE</text>
<text transform="translate(556.8,195.6)" text-anchor="middle" style="font:16px 'Liberation Sans',sans-serif" fill="#141414">A:811</text>
<text transform="translate(603.5,220.7) scale(0.88,1)" text-anchor="middle" style="font:16px 'Liberation Sans',sans-serif" fill="#141414">GLU</text>
<text transform="translate(603.5,232.0)" text-anchor="middle" style="font:16px 'Liberation Sans',sans-serif" fill="#141414">A:640</text>
<text transform="translate(666.0,225.0) scale(0.88,1)" text-anchor="middle" style="font:16px 'Liberation Sans',sans-serif" fill="#141414">CYS</text>
<text transform="translate(666.0,236.3)" text-anchor="middle" style="font:16px 'Liberation Sans',sans-serif" fill="#141414">A:809</text>
<text transform="translate(566.4,235.6) scale(0.88,1)" text-anchor="middle" style="font:16px 'Liberation Sans',sans-serif" fill="#141414">VAL</text>
<text transform="translate(566.4,246.9)" text-anchor="middle" style="font:16px 'Liberation Sans',sans-serif" fill="#141414">A:603</text>
<text transform="translate(516.5,246.2) scale(0.88,1)" text-anchor="middle" style="font:16px 'Liberation Sans',sans-serif" fill="#141414">ASP</text>
<text transform="translate(516.5,257.5)" text-anchor="middle" style="font:16px 'Liberation Sans',sans-serif" fill="#141414">A:810</text>
<text transform="translate(550.4,249.4) scale(0.88,1)" text-anchor="middle" style="font:16px 'Liberation Sans',sans-serif" fill="#141414">VAL</text>
<text transform="translate(550.4,260.7)" text-anchor="middle" style="font:16px 'Liberation Sans',sans-serif" fill="#141414">A:654</text>
<text transform="translate(419.4,266.6) scale(0.88,1)" text-anchor="middle" style="font:16px 'Liberation Sans',sans-serif" fill="#141414">ILE</text>
<text transform="translate(419.4,277.9)" text-anchor="middle" style="font:16px 'Liberation Sans',sans-serif" fill="#141414">A:808</text>
<text transform="translate(479.8,276.7) scale(0.88,1)" text-anchor="middle" style="font:16px 'Liberation Sans',sans-serif" fill="#141414">LEU</text>
<text transform="translate(479.8,288.0)" text-anchor="middle" style="font:16px 'Liberation Sans',sans-serif" fill="#141414">A:644</text>
<text transform="translate(816.1,279.8) scale(0.88,1)" text-anchor="middle" style="font:16px 'Liberation Sans',sans-serif" fill="#141414">GLY</text>
<text transform="translate(816.1,291.1)" text-anchor="middle" style="font:16px 'Liberation Sans',sans-serif" fill="#141414">A:676</text>
<text transform="translate(394.4,336.3) scale(0.88,1)" text-anchor="middle" style="font:16px 'Liberation Sans',sans-serif" fill="#141414">LEU</text>
<text transform="translate(394.4,347.6)" text-anchor="middle" style="font:16px 'Liberation Sans',sans-serif" fill="#141414">A:783</text>
<text transform="translate(575.8,378.5) scale(0.88,1)" text-anchor="middle" style="font:16px 'Liberation Sans',sans-serif" fill="#141414">LYS</text>
<text transform="translate(575.8,389.8)" text-anchor="middle" style="font:16px 'Liberation Sans',sans-serif" fill="#141414">A:623</text>
<text transform="translate(596.2,413.2) scale(0.88,1)" text-anchor="middle" style="font:16px 'Liberation Sans',sans-serif" fill="#141414">THR</text>
<text transform="translate(596.2,424.5)" text-anchor="middle" style="font:16px 'Liberation Sans',sans-serif" fill="#141414">A:670</text>
<text transform="translate(696.6,404.1) scale(0.88,1)" text-anchor="middle" style="font:16px 'Liberation Sans',sans-serif" fill="#141414">LEU</text>
<text transform="translate(696.6,415.4)" text-anchor="middle" style="font:16px 'Liberation Sans',sans-serif" fill="#141414">A:595</text>
<text transform="translate(751.6,413.9) scale(0.88,1)" text-anchor="middle" style="font:16px 'Liberation Sans',sans-serif" fill="#141414">ALA</text>
<text transform="translate(751.6,425.2)" text-anchor="middle" style="font:16px 'Liberation Sans',sans-serif" fill="#141414">A:621</text>
<text transform="translate(812.3,397.5) scale(0.88,1)" text-anchor="middle" style="font:16px 'Liberation Sans',sans-serif" fill="#141414">TYR</text>
<text transform="translate(812.3,408.8)" text-anchor="middle" style="font:16px 'Liberation Sans',sans-serif" fill="#141414">A:672</text>
<text transform="translate(396.2,419.1) scale(0.88,1)" text-anchor="middle" style="font:16px 'Liberation Sans',sans-serif" fill="#141414">CYS</text>
<text transform="translate(396.2,430.4)" text-anchor="middle" style="font:16px 'Liberation Sans',sans-serif" fill="#141414">A:788</text>
<text transform="translate(658.1,431.1) scale(0.88,1)" text-anchor="middle" style="font:16px 'Liberation Sans',sans-serif" fill="#141414">LEU</text>
<text transform="translate(658.1,442.4)" text-anchor="middle" style="font:16px 'Liberation Sans',sans-serif" fill="#141414">A:799</text>
<text transform="translate(457.1,448.1) scale(0.88,1)" text-anchor="middle" style="font:16px 'Liberation Sans',sans-serif" fill="#141414">HIS</text>
<text transform="translate(457.1,459.4)" text-anchor="middle" style="font:16px 'Liberation Sans',sans-serif" fill="#141414">A:790</text>
<text transform="translate(552.5,441.8) scale(0.88,1)" text-anchor="middle" style="font:16px 'Liberation Sans',sans-serif" fill="#141414">LEU</text>
<text transform="translate(552.5,453.1)" text-anchor="middle" style="font:16px 'Liberation Sans',sans-serif" fill="#141414">A:647</text>
<text transform="translate(507.6,462.0) scale(0.88,1)" text-anchor="middle" style="font:16px 'Liberation Sans',sans-serif" fill="#141414">VAL</text>
<text transform="translate(507.6,473.3)" text-anchor="middle" style="font:16px 'Liberation Sans',sans-serif" fill="#141414">A:643</text>
<text transform="translate(618.3,459.8) scale(0.88,1)" text-anchor="middle" style="font:16px 'Liberation Sans',sans-serif" fill="#141414">VAL</text>
<text transform="translate(618.3,471.1)" text-anchor="middle" style="font:16px 'Liberation Sans',sans-serif" fill="#141414">A:622</text>
<text transform="translate(667.9,474.4) scale(0.88,1)" text-anchor="middle" style="font:16px 'Liberation Sans',sans-serif" fill="#141414">GLU</text>
<text transform="translate(667.9,485.7)" text-anchor="middle" style="font:16px 'Liberation Sans',sans-serif" fill="#141414">A:671</text>
<text transform="translate(716.9,464.1) scale(0.88,1)" text-anchor="middle" style="font:16px 'Liberation Sans',sans-serif" fill="#141414">CYS</text>
<text transform="translate(716.9,475.4)" text-anchor="middle" style="font:16px 'Liberation Sans',sans-serif" fill="#141414">A:673</text>
<text transform="translate(578.6,489.5) scale(0.88,1)" text-anchor="middle" style="font:16px 'Liberation Sans',sans-serif" fill="#141414">VAL</text>
<text transform="translate(578.6,500.8)" text-anchor="middle" style="font:16px 'Liberation Sans',sans-serif" fill="#141414">A:668</text>
</g></svg>
<svg style="position:absolute;left:17px;top:34px" width="14" height="16" viewBox="0 0 14 16"><circle cx="4.8" cy="2.8" r="1.8" fill="#c8c8c8"/><circle cx="2.9" cy="6" r="2.2" fill="#30b030"/><circle cx="9.3" cy="4.8" r="2.2" fill="#e02828"/><circle cx="6.8" cy="8.2" r="2.2" fill="#2888e8"/><path d="M10.1 9.2v6.2M7 12.3h6.2" stroke="#000" stroke-width="1.8"/></svg>
<svg style="position:absolute;left:78px;top:39px" width="6" height="4" viewBox="0 0 6 4"><path d="M0.5 0.5h5l-2.5 3z" fill="#303030"/></svg>
<svg style="position:absolute;left:477px;top:39px" width="7" height="4" viewBox="0 0 7 4"><path d="M0.5 0.5h6l-3 3z" fill="#303030"/></svg>
<svg style="position:absolute;left:91px;top:34px" width="16" height="16" viewBox="0 0 16 16"><path d="M1.5 2h4l1.5 1.5h5.5v11h-11z" fill="#d4d4d4" stroke="#8a8a8a"/><path d="M3.5 6.5h11.5l-2 8h-11z" fill="#4a8ad8" stroke="#2a62b0"/></svg>
<svg style="position:absolute;left:110px;top:33px" width="16" height="17" viewBox="0 0 16 17"><circle cx="6.3" cy="6" r="5" fill="#5cc0ec" stroke="#1c88c8"/><circle cx="5.3" cy="5" r="2.2" fill="#d8f4ff"/><path d="M4.5 8.5h3.5l1 1h5v6h-9.5z" fill="#d8d8d8" stroke="#808080"/><path d="M5.5 11.5h9.5l-1.5 4h-8.5z" fill="#4a8ad8" stroke="#2a62b0"/></svg>
<svg style="position:absolute;left:130px;top:34px" width="16" height="16" viewBox="0 0 16 16"><rect x="1.5" y="1.5" width="13" height="13" rx="2" fill="#6a6a6a" stroke="#555"/><rect x="3.5" y="2.5" width="9" height="5" fill="#ececec"/><rect x="4.5" y="9.5" width="7" height="5" fill="#d0d0d0"/><rect x="5.5" y="11" width="2" height="2" fill="#555"/></svg>
<svg style="position:absolute;left:157px;top:35px" width="16" height="16" viewBox="0 0 16 16"><path d="M1.2 5.5L7.5 0.8L7.5 3.2C12 3.2 15 6 14.5 10C14 13 11.5 14.5 9.5 15C11.5 13 12 11 11 9.5C10 8 8.5 7.8 7.5 7.8L7.5 10Z" fill="#1a6ee0"/></svg>
<svg style="position:absolute;left:176px;top:35px" width="16" height="16" viewBox="0 0 16 16"><g transform="translate(16,0) scale(-1,1)"><path d="M1.2 5.5L7.5 0.8L7.5 3.2C12 3.2 15 6 14.5 10C14 13 11.5 14.5 9.5 15C11.5 13 12 11 11 9.5C10 8 8.5 7.8 7.5 7.8L7.5 10Z" fill="#b0b0b0"/></g></svg>
<svg style="position:absolute;left:204px;top:35px" width="14" height="14" viewBox="0 0 14 14"><path d="M1.5 1.5L12.5 12.5M12.5 1.5L1.5 12.5" stroke="#707070" stroke-width="2.2"/></svg>
<svg style="position:absolute;left:223px;top:34px" width="16" height="16" viewBox="0 0 16 16"><circle cx="12" cy="4" r="2.5" fill="none" stroke="#a8a8a8" stroke-width="1.6"/><circle cx="12" cy="12" r="2.5" fill="none" stroke="#a8a8a8" stroke-width="1.6"/><path d="M1 4L10 10.5M1 12L10 5.5" stroke="#a8a8a8" stroke-width="1.8"/></svg>
<svg style="position:absolute;left:243px;top:34px" width="16" height="16" viewBox="0 0 16 16"><rect x="0.5" y="1.5" width="8" height="8" fill="#e0e0e0" stroke="#909090"/><rect x="3.5" y="6.5" width="8" height="8.5" fill="#ececec" stroke="#909090"/><path d="M9.5 3.5L14 7.5" stroke="#2a80e0" stroke-width="1.6"/><path d="M9 2h4l-4 4z" fill="#2a80e0"/></svg>
<svg style="position:absolute;left:263px;top:34px" width="13" height="16" viewBox="0 0 13 16"><rect x="1" y="3" width="11" height="12" rx="2" fill="#c4c4c4" stroke="#a0a0a0"/><rect x="4" y="1.5" width="5" height="3" fill="#a8a8a8"/><path d="M3.5 7.5h6M3.5 10h6" stroke="#eee" stroke-width="1.2"/></svg>
<svg style="position:absolute;left:290px;top:35px" width="13" height="13" viewBox="0 0 13 13"><polygon points="10.70,5.20 12.42,5.54 12.42,7.46 10.70,7.80 10.39,8.55 11.36,10.01 10.01,11.36 8.55,10.39 7.80,10.70 7.46,12.42 5.54,12.42 5.20,10.70 4.45,10.39 2.99,11.36 1.64,10.01 2.61,8.55 2.30,7.80 0.58,7.46 0.58,5.54 2.30,5.20 2.61,4.45 1.64,2.99 2.99,1.64 4.45,2.61 5.20,2.30 5.54,0.58 7.46,0.58 7.80,2.30 8.55,2.61 10.01,1.64 11.36,2.99 10.39,4.45" fill="#e2e2de" stroke="#8e8e8e" stroke-width="1"/><circle cx="6.5" cy="6.5" r="2.3" fill="#f0f0ee" stroke="#8e8e8e" stroke-width="1"/></svg>
<svg style="position:absolute;left:317px;top:34px" width="16" height="16" viewBox="0 0 16 16"><rect x="0.5" y="1.5" width="12" height="13" fill="#f4f4f4" stroke="#8a8a8a"/><rect x="2.5" y="3.5" width="3.5" height="3" fill="#e02020"/><rect x="6" y="3.5" width="3.5" height="3" fill="#f0a020"/><rect x="2.5" y="6.5" width="3.5" height="3" fill="#20b020"/><rect x="6" y="6.5" width="3.5" height="3" fill="#2060e0"/><ellipse cx="11" cy="12.8" rx="4.2" ry="2.6" fill="#405060"/><circle cx="11" cy="12.8" r="1.1" fill="#cde"/></svg>
<svg style="position:absolute;left:910px;top:7px" width="16" height="16" viewBox="0 0 16 16"><circle cx="5.5" cy="5.5" r="4.2" fill="#cfe4fc" stroke="#8a9ab4" stroke-width="1.4"/><path d="M8.6 8.6L13.2 13.2" stroke="#1a4a90" stroke-width="2.6"/></svg>
<svg style="position:absolute;left:59px;top:62px" width="12" height="12" viewBox="0 0 12 12"><rect x="0" y="0" width="12" height="12" rx="2" fill="#e0684a"/><path d="M3.2 3.2L8.8 8.8M8.8 3.2L3.2 8.8" stroke="#fff" stroke-width="1.8"/></svg>
<svg style="position:absolute;left:151px;top:62px" width="12" height="12" viewBox="0 0 12 12"><rect x="0" y="0" width="12" height="12" rx="2" fill="#b8b8b8"/><path d="M3.2 3.2L8.8 8.8M8.8 3.2L3.2 8.8" stroke="#fff" stroke-width="1.8"/></svg>
<svg style="position:absolute;left:417px;top:63px" width="12" height="12" viewBox="0 0 12 12"><rect x="0" y="0" width="12" height="12" rx="2" fill="#e0684a"/><path d="M3.2 3.2L8.8 8.8M8.8 3.2L3.2 8.8" stroke="#fff" stroke-width="1.8"/></svg>
<svg style="position:absolute;left:228px;top:63px" width="8" height="12" viewBox="0 0 8 12"><rect x="2" y="0.8" width="4" height="5.7" fill="#9090a0" stroke="#000" stroke-width="1.2"/><rect x="0.8" y="6" width="6.4" height="1.5" fill="#000"/><rect x="3.4" y="7" width="1.3" height="4.5" fill="#222"/></svg>
<svg style="position:absolute;left:253px;top:64px" width="9" height="10" viewBox="0 0 9 10"><rect x="3" y="1" width="5" height="5" fill="none" stroke="#505050" stroke-width="1.2"/><rect x="0.8" y="4" width="5" height="5" fill="#d8d8e4" stroke="#505050" stroke-width="1.2"/></svg>
<svg style="position:absolute;left:894px;top:63px" width="12" height="12" viewBox="0 0 12 12"><rect x="4" y="1" width="7" height="7" fill="none" stroke="#505050" stroke-width="1.2"/><rect x="1" y="6" width="5" height="5" fill="#d8d8e4" stroke="#505050" stroke-width="1.2"/></svg>
<svg style="position:absolute;left:919px;top:64px" width="11" height="11" viewBox="0 0 11 11"><rect x="1" y="1" width="9" height="9" fill="none" stroke="#505050" stroke-width="1.2"/><rect x="1" y="1" width="9" height="1.6" fill="#505050"/></svg>
<svg style="position:absolute;left:288px;top:60px" width="14" height="15" viewBox="0 0 14 15"><rect x="0.5" y="0.5" width="13" height="14" fill="#f4f4f4" stroke="#909090"/><circle cx="6" cy="8.5" r="3" fill="none" stroke="#4a8ae0" stroke-width="1.1"/><circle cx="8" cy="6.5" r="3" fill="none" stroke="#6a9ad0" stroke-width="1.1"/></svg>
<svg style="position:absolute;left:232px;top:92px" width="10" height="6" viewBox="0 0 10 6"><path d="M0 5.5L5 0.5L10 5.5z" fill="#404040"/></svg>
<svg style="position:absolute;left:232px;top:675px" width="10" height="6" viewBox="0 0 10 6"><path d="M0 0.5L10 0.5L5 5.5z" fill="#404040"/></svg>
<svg style="position:absolute;left:233px;top:386px" width="7" height="7" viewBox="0 0 7 7"><path d="M0 0.5h7M0 2.5h7M0 4.5h7M0 6.5h7" stroke="#9a9a9a" stroke-width="1"/></svg>
<div class="a" style="left:214px;top:93px;font:11px 'Liberation Sans',sans-serif;color:#a0a0a0">?</div>
<svg style="position:absolute;left:10px;top:234px" width="12" height="13" viewBox="0 0 12 13"><rect x="0.5" y="0.5" width="11" height="2" fill="#505050"/><path d="M0.5 9L6 3.5L11.5 9z" fill="#505050"/><rect x="4" y="8" width="4" height="4" fill="#505050"/></svg>
<svg style="position:absolute;left:55px;top:235px" width="11" height="12" viewBox="0 0 11 12"><path d="M0 6L5.5 0.5L11 6z" fill="#505050"/><rect x="3.5" y="5.5" width="4" height="5" fill="#505050"/></svg>
<svg style="position:absolute;left:100px;top:235px" width="11" height="12" viewBox="0 0 11 12"><rect x="3.5" y="0.5" width="4" height="5" fill="#505050"/><path d="M0 5L5.5 10.5L11 5z" fill="#505050"/></svg>
<svg style="position:absolute;left:144px;top:234px" width="12" height="13" viewBox="0 0 12 13"><rect x="4" y="0.5" width="4" height="4" fill="#505050"/><path d="M0.5 4L6 9.5L11.5 4z" fill="#505050"/><rect x="0.5" y="10.5" width="11" height="2" fill="#505050"/></svg>
<svg style="position:absolute;left:13px;top:306px" width="3" height="14" viewBox="0 0 3 14"><path d="M1.5 0v14" stroke="#a0a0a0" stroke-width="1.2" stroke-dasharray="2 1.2"/></svg>
<div class="a" style="left:0px;top:690px;width:938px;height:2px;background:#b8bcc4"></div>
<div class="a" style="left:0px;top:692px;width:943px;height:3px;background:#d6dae2"></div>
<div class="a" style="left:609px;top:693px;width:308px;height:2px;background:linear-gradient(#8e9298,#b0b4ba)"></div>
<div class="a" style="left:938px;top:692px;width:5px;height:3px;background:#d8d8d8"></div>
<div class="a" style="left:937px;top:0px;width:2px;height:692px;background:#72728a"></div>
<div class="a" style="left:939px;top:0px;width:4px;height:695px;background:#d4d4d4"></div>
<div class="a" style="left:939px;top:10px;width:4px;height:1px;background:#b8b8b8"></div>
</body></html>
